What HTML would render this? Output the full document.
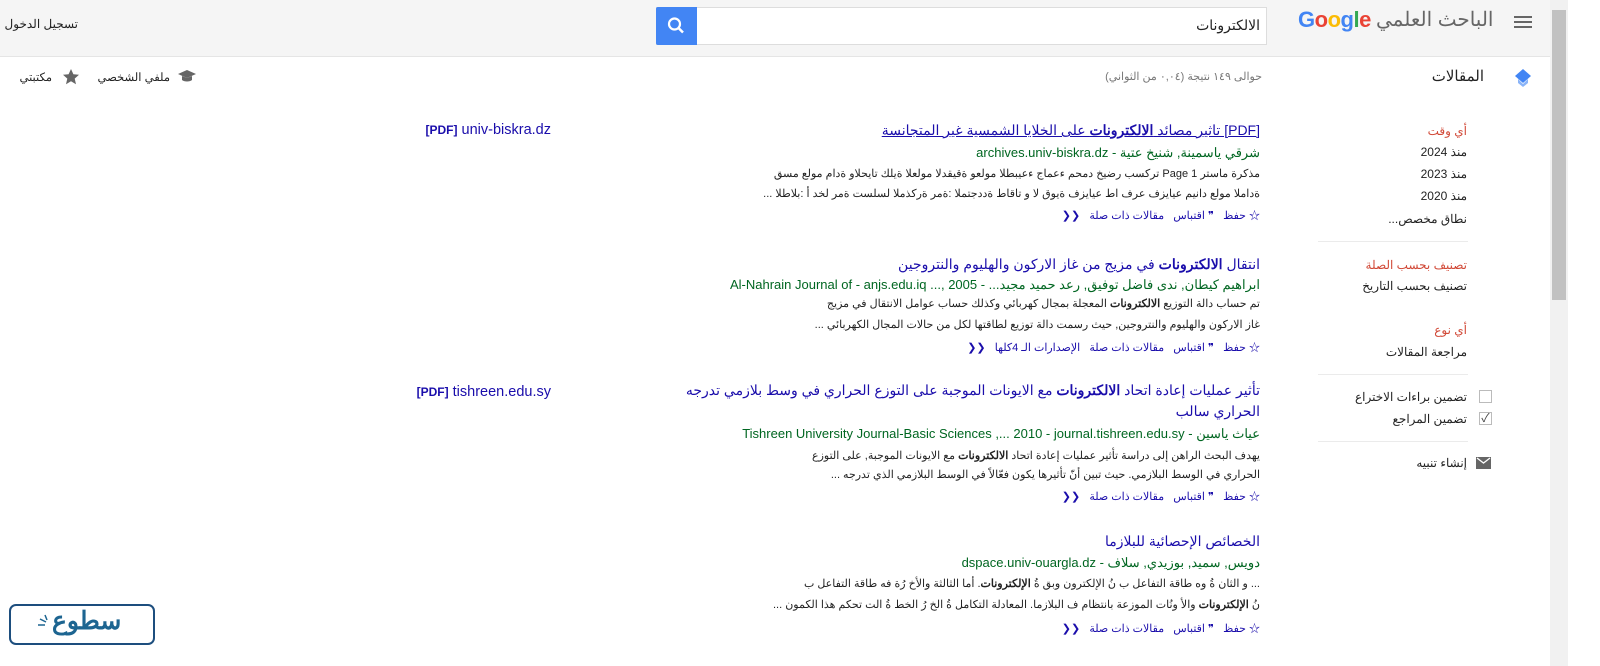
<!DOCTYPE html>
<html><head><meta charset="utf-8"><style>
*{margin:0;padding:0;box-sizing:border-box}
body{width:1600px;height:666px;overflow:hidden;background:#fff;font-family:"Liberation Sans","Noto Sans CJK SC",sans-serif;position:relative;color:#222}
.a{position:absolute;white-space:nowrap;direction:rtl}
.t{font-size:14px;color:#1a0dab}
.g{font-size:13px;color:#006621}
.s{font-size:11px;color:#222}
.act{font-size:11px;color:#1a0dab}
.sb{font-size:12px;color:#222}
.red{color:#d14836}
.sep{position:absolute;height:1px;background:#ebebeb;left:1318px;width:150px}
</style></head><body>
<div style="position:absolute;left:0;top:0;width:1550px;height:57px;background:#f5f5f5;border-bottom:1px solid #e5e5e5"></div>
<div class="a" style="right:1522px;top:17px;font-size:12px">تسجيل الدخول</div>
<div style="position:absolute;left:656px;top:7px;width:611px;height:38px;background:#fff;border:1px solid #ddd"></div>
<div style="position:absolute;left:656px;top:7px;width:41px;height:38px;background:#4285f4;border-radius:2px 0 0 2px">
<svg width="41" height="38"><circle cx="18.5" cy="17" r="5.5" fill="none" stroke="#fff" stroke-width="2.2"/><line x1="22.5" y1="21" x2="27" y2="25.5" stroke="#fff" stroke-width="2.5"/></svg></div>
<div class="a" style="right:340px;top:17px;font-size:14px;color:#222">الالكترونات</div>
<div class="a" style="left:1298px;top:7px;font-size:22px;font-weight:bold;direction:ltr;letter-spacing:-0.5px"><span style="color:#4285f4">G</span><span style="color:#ea4335">o</span><span style="color:#fbbc05">o</span><span style="color:#4285f4">g</span><span style="color:#34a853">l</span><span style="color:#ea4335">e</span></div>
<div class="a" style="left:1376px;top:7px;font-size:20px;color:#666">الباحث العلمي</div>
<div style="position:absolute;left:1514px;top:16px;width:18px;height:2px;background:#666;box-shadow:0 5px 0 #666,0 10px 0 #666"></div>
<div style="position:absolute;left:1550px;top:0;width:18px;height:666px;background:#f1f1f1"></div>
<div style="position:absolute;left:1552px;top:10px;width:14px;height:290px;background:#c1c1c1"></div>

<svg style="position:absolute;left:1513px;top:68px" width="20" height="20"><path d="M10 1L18 8 10 15 2 8Z" fill="#4285f4"/><path d="M5 11L10 16 15 11 15 15 10 19 5 15Z" fill="#8ab4f8"/></svg>
<div class="a" style="right:116px;top:67px;font-size:15px;color:#222">المقالات</div>
<div class="a" style="right:338px;top:70px;font-size:11px;color:#777">حوالى ١٤٩ نتيجة (٠,٠٤ من الثواني)</div>
<svg style="position:absolute;left:177px;top:68px" width="20" height="16"><path d="M10 2L19 6 10 10 1 6Z" fill="#666"/><path d="M5 8v4c2 2 8 2 10 0V8L10 10Z" fill="#666"/></svg>
<div class="a" style="right:1430px;top:70px;font-size:11.5px">ملفي الشخصي</div>
<svg style="position:absolute;left:62px;top:68px" width="18" height="17"><path d="M9 1l2.4 5.3 5.6.5-4.3 3.8 1.3 5.6L9 13.3 4 16.2l1.3-5.6L1 6.8l5.6-.5Z" fill="#666"/></svg>
<div class="a" style="right:1548px;top:70px;font-size:11.5px">مكتبتي</div>

<div class="a sb red" style="right:133px;top:124px">أي وقت</div>
<div class="a sb" style="right:133px;top:145px">منذ 2024</div>
<div class="a sb" style="right:133px;top:167px">منذ 2023</div>
<div class="a sb" style="right:133px;top:189px">منذ 2020</div>
<div class="a sb" style="right:133px;top:212px">نطاق مخصص...</div>
<div class="sep" style="top:241px"></div>
<div class="a sb red" style="right:133px;top:258px">تصنيف بحسب الصلة</div>
<div class="a sb" style="right:133px;top:279px">تصنيف بحسب التاريخ</div>
<div class="a sb red" style="right:133px;top:323px">أي نوع</div>
<div class="a sb" style="right:133px;top:345px">مراجعة المقالات</div>
<div class="sep" style="top:374px"></div>
<div style="position:absolute;left:1479px;top:390px;width:13px;height:13px;border:1px solid #bbb"></div>
<div class="a sb" style="right:133px;top:390px">تضمين براءات الاختراع</div>
<div style="position:absolute;left:1479px;top:412px;width:13px;height:13px;border:1px solid #bbb;font-size:12px;line-height:11px;color:#444;text-align:center">✓</div>
<div class="a sb" style="right:133px;top:412px">تضمين المراجع</div>
<div class="sep" style="top:441px"></div>
<svg style="position:absolute;left:1476px;top:457px" width="15" height="12"><rect width="15" height="12" fill="#666"/><path d="M1 1l6.5 5L14 1" stroke="#fff" fill="none" stroke-width="1.3"/></svg>
<div class="a sb" style="right:133px;top:456px">إنشاء تنبيه</div>

<div class="a" style="right:1049px;top:122px;font-size:14.5px;color:#1a0dab;direction:ltr"><b style="font-size:12px">[PDF]</b> univ-biskra.dz</div>
<div class="a" style="right:1049px;top:384px;font-size:14.5px;color:#1a0dab;direction:ltr"><b style="font-size:12px">[PDF]</b> tishreen.edu.sy</div>

<div class="a t" style="right:340px;top:122px;text-decoration:underline">[PDF] تاثير مصائد <b>الالكترونات</b> على الخلايا الشمسية غير المتجانسة</div>
<div class="a g" style="right:340px;top:145px">شرقي ياسمينة, شنيخ عتية - archives.univ-biskra.dz</div>
<div class="a s" style="right:340px;top:167px">مذكرة ماستر 1 Page تركسب رضيخ دمحم ءعماج ءعيبطلا مولعو ةقيقدلا مولعلا ةيلك تايحلاو ةدام مولع مسق</div>
<div class="a s" style="right:340px;top:187px">ةداملا مولع دانيم عيايزف عرف اط عيايزف ةيوق لا و تاقاط ةددجتملا :ةمر ةركذملا لسلست ةمر لخد أ :بلاطلا ...</div>
<div class="a act" style="right:340px;top:207px">☆ حفظ &nbsp; ❞ اقتباس &nbsp; مقالات ذات صلة &nbsp; ❮❮</div>
<div class="a t" style="right:340px;top:256px">انتقال <b>الالكترونات</b> في مزيج من غاز الاركون والهليوم والنتروجين</div>
<div class="a g" style="right:340px;top:277px">ابراهيم كيطان, ندى فاضل توفيق, رعد حميد مجيد... - 2005 ,... Al-Nahrain Journal of - anjs.edu.iq</div>
<div class="a s" style="right:340px;top:297px">تم حساب دالة التوزيع <b>الالكترونات</b> المعجلة بمجال كهربائي وكذلك حساب عوامل الانتقال في مزيج</div>
<div class="a s" style="right:340px;top:318px">غاز الاركون والهليوم والنتروجين, حيث رسمت دالة توزيع لطاقتها لكل من حالات المجال الكهربائي ...</div>
<div class="a act" style="right:340px;top:339px">☆ حفظ &nbsp; ❞ اقتباس &nbsp; مقالات ذات صلة &nbsp; الإصدارات الـ 4كلها &nbsp; ❮❮</div>
<div class="a t" style="right:340px;top:382px">تأثير عمليات إعادة اتحاد <b>الالكترونات</b> مع الايونات الموجبة على التوزع الحراري في وسط بلازمي تدرجه</div>
<div class="a t" style="right:340px;top:403px">الحراري سالب</div>
<div class="a g" style="right:340px;top:426px">عياث ياسين - Tishreen University Journal-Basic Sciences ,... 2010 - journal.tishreen.edu.sy</div>
<div class="a s" style="right:340px;top:449px">يهدف البحث الراهن إلى دراسة تأثير عمليات إعادة اتحاد <b>الالكترونات</b> مع الايونات الموجبة, على التوزع</div>
<div class="a s" style="right:340px;top:468px">الحراري في الوسط البلازمي. حيث تبين أنّ تأثيرها يكون فعّالاً في الوسط البلازمي الذي تدرجه ...</div>
<div class="a act" style="right:340px;top:488px">☆ حفظ &nbsp; ❞ اقتباس &nbsp; مقالات ذات صلة &nbsp; ❮❮</div>
<div class="a t" style="right:340px;top:533px">الخصائص الإحصائية للبلازما</div>
<div class="a g" style="right:340px;top:555px">دويس, سميد, بوزيدي, سلاف - dspace.univ-ouargla.dz</div>
<div class="a s" style="right:340px;top:577px">... و الثان ةُ وه طاقة التفاعل ب نُ الإلكترون وبق ةُ <b>الإلكترونات</b>. أما الثالثة والأخ رُة فه طاقة التفاعل ب</div>
<div class="a s" style="right:340px;top:598px">نُ <b>الإلكترونات</b> والأ ونُات الموزعة بانتظام ف البلازما. المعادلة التكامل ةُ الخ رُ الخط ةُ الت تحكم هذا الكمون ...</div>
<div class="a act" style="right:340px;top:620px">☆ حفظ &nbsp; ❞ اقتباس &nbsp; مقالات ذات صلة &nbsp; ❮❮</div>

<div style="position:absolute;left:9px;top:604px;width:146px;height:41px;border:2px solid #1d4e7e;border-radius:7px;background:#fff"></div>
<div class="a" style="left:52px;top:606px;font-size:25px;font-weight:bold;color:#1d6591">سطوع</div>
<svg style="position:absolute;left:38px;top:614px" width="14" height="16"><path d="M2 5l6 3M7 1l2 5M0 11l7 0" stroke="#1d6591" stroke-width="1.5"/></svg>
</body></html>
